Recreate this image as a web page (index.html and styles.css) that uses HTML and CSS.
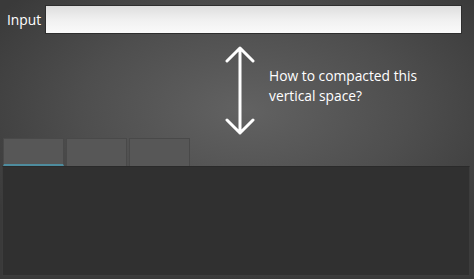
FILE: index.html
```html
<!DOCTYPE html>
<html lang="en">
<head>
    <meta charset="UTF-8">
    <title>Input</title>
    <link rel="stylesheet" href="styles.css">
</head>
<body>

    <!-- input row -->
    <div class="input-row">
        <label class="input-label" for="main-input">Input</label>
        <input class="input-box" id="main-input" type="text">
    </div>

    <!-- empty space with note -->
    <div class="gap-area">
        <svg class="arrow" width="30" height="90" viewBox="0 0 30 90">
            <path d="M15 2 V87 M2 15 L15 2 L28 15 M2 74 L15 87 L28 74" fill="none" stroke="#fff" stroke-width="3" stroke-linecap="round" stroke-linejoin="round"/>
        </svg>
        <p class="note">How to compacted this<br>vertical space?</p>
    </div>

    <!-- tabs -->
    <div class="tabs">
        <div class="tab active"></div>
        <div class="tab"></div>
        <div class="tab"></div>
    </div>

    <!-- content panel -->
    <div class="panel"></div>

</body>
</html>
```

FILE: styles.css
```css
html, body {
    height: 100%;
}

body {
    margin: 0;
    font-family: "Open Sans", "Noto Sans", sans-serif;
    color: #fff;
    background: radial-gradient(ellipse 300px 170px at 245px 110px, #626262 0%, #4e4e4e 55%, #3a3a3a 100%);
    background-color: #3a3a3a;
    display: flex;
    flex-direction: column;
    overflow: hidden;
}

/* input row */
.input-row {
    display: flex;
    align-items: center;
    padding: 5px 12px 0 7px;
    height: 29px;
}

.input-label {
    font-size: 13.8px;
    width: 38px;
    line-height: 17px;
}

.input-box {
    flex: 1;
    height: 29px;
    box-sizing: border-box;
    margin: 0;
    border: 1px solid #2e2e2e;
    background: linear-gradient(#dedede, #f0f0f0 50%, #fafafa);
    outline: none;
}

/* note area */
.gap-area {
    display: flex;
    align-items: flex-start;
    padding: 12px 0 0 225px;
    height: 92px;
}

.arrow {
    display: block;
}

.note {
    margin: 20px 0 0 14px;
    font-size: 13.8px;
    line-height: 20px;
}

/* tabs */
.tabs {
    display: flex;
    gap: 2px;
    padding-left: 3px;
    height: 28px;
}

.tab {
    width: 61px;
    box-sizing: border-box;
    background: #575757;
    border: 1px solid #494949;
    border-bottom: none;
}

.tab.active {
    border-bottom: 2px solid #4e8c9e;
}

/* panel */
.panel {
    flex: 1;
    margin: 0 4px 3px 2px;
    background: #303030;
    border: 1px solid #3c3c3c;
    border-top-color: #2a2a2a;
}
```
